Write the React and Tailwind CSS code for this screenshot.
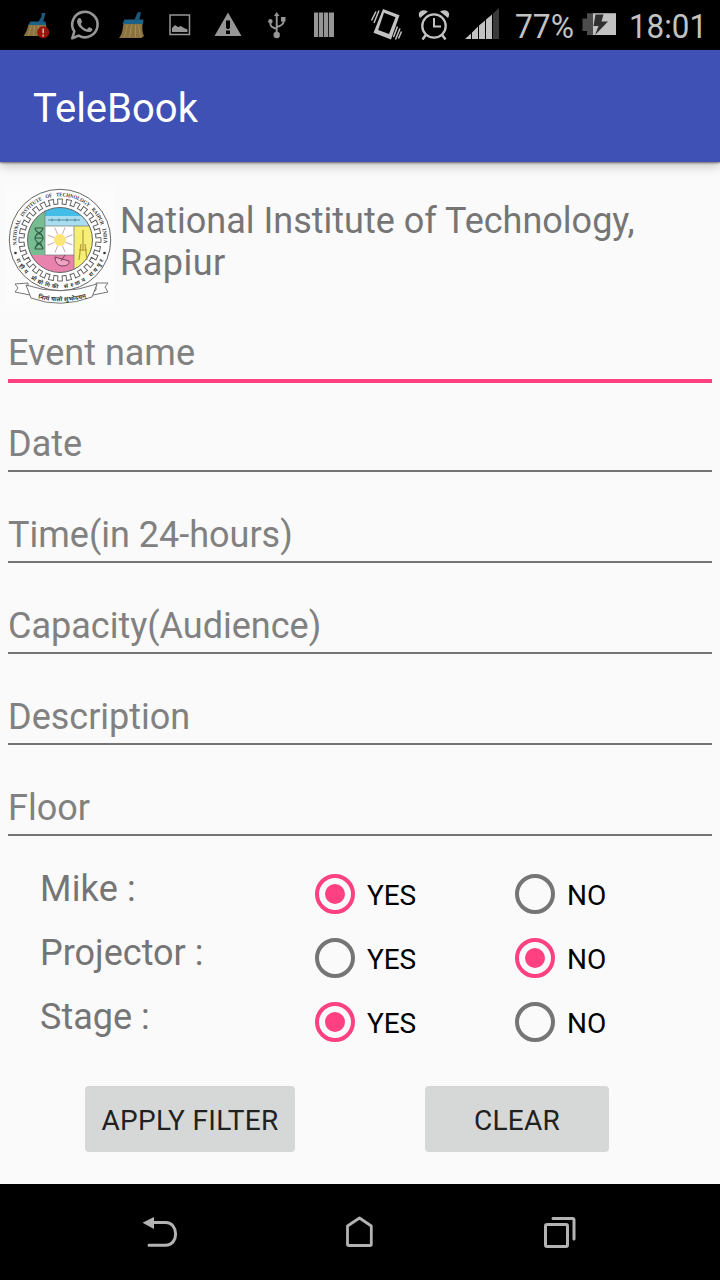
import React from "react";

function T({ children, className = "" }) {
  return <span className={"block whitespace-nowrap " + className}>{children}</span>;
}

function StatusBar() {
  return (
    <header className="h-[50px] bg-black overflow-hidden">
      <svg width="720" height="50" viewBox="0 0 720 50">
        <g transform="translate(21.5 12.5)">
          <path d="M7 12H24.500L25.500 23.500H2C5 20 6 16 7 12Z" fill="#8a7340" />
          <path d="M10 13L7 23M13 13L12 23M17 13L17 23M21 13L22 23" stroke="#a88e56" />
          <path d="M9 9H24L24.500 12.500H7Z" fill="#1c6288" />
          <path d="M16.500 10L20 4V0.500H24L21.500 10Z" fill="#1b587a" />
          <circle cx="21.700" cy="19.800" r="6" fill="#9c1208" />
          <path d="M21.700 16V20.800M21.700 22V24" stroke="#c9b0ac" strokeWidth="1.700" />
        </g>
        <path d="M72.300 38.200L74.300 31.500A12.700 12.700 0 1 1 78.700 35.600Z" fill="none" stroke="#969696" strokeWidth="2.600" strokeLinejoin="round" />
        <path d="M78.300 18.500C79.500 17.500 80.500 18 81 19L82 21.500C82.300 22.500 80.500 23.500 81 24.500C82.300 27 84.500 28.600 86.500 29.300C87.700 29.500 88.300 27 89.500 27.300L92.300 28.700C93 29.200 91.700 31.700 90 32C87 32.500 83.500 31 80.500 28C77 24.500 76 21 78.300 18.500Z" fill="#969696" />
        <g transform="translate(117.500 11)">
          <path d="M6 13H25C24.500 18 25 22 26.500 25L24 27H1.500C5 23 5 18 6 13Z" fill="#8a7340" />
          <path d="M10 14L7 26M14 14L12 26M18 14L18 26M21 14L23 26" stroke="#a88e56" />
          <path d="M7 8.500H26L25.500 13H5Z" fill="#1c6288" />
          <path d="M16.500 10L20 1.500L23.500 1L21.500 10Z" fill="#1b587a" />
        </g>
        <rect x="170" y="15" width="19.500" height="19.500" fill="none" stroke="#969696" strokeWidth="1.500" />
        <path d="M172 32V28L175 25L178 27L181 26L184 28L187.500 29.500V32Z" fill="#969696" />
        <path fillRule="evenodd" d="M228 12.500L241.500 36H214.500ZM226 20.500V27.500L227 29H229L230 27.500V20.500ZM226 30.500V34H230V30.500Z" fill="#969696" />
        <path d="M276.700 34V14M270.500 21V24.500Q270.500 27 276.700 28.800M283.500 19V22Q283.500 25 276.700 27" fill="none" stroke="#969696" strokeWidth="1.900" />
        <g fill="#969696">
          <circle cx="276.700" cy="35" r="3.200" />
          <circle cx="270.400" cy="21.300" r="2.200" />
          <path d="M281 17h4.500v4.500H281ZM276.700 12L279.500 16H274Z" />
        </g>
        <path d="M314 12.500h4.200V37h-4.200zM319 12.500h4.200V37h-4.200zM324 12.500h4.200V37h-4.200zM329 12.500h5V37h-5z" fill="#969696" />
        <path fillRule="evenodd" d="M383 9L399.500 15.200L391 39.500L373.500 32.800ZM384 12.800L378.200 30L389 34L395.500 17.200Z" fill="#c2c2c2" />
        <path d="M376 11.500L371.500 20.500M379 10.500L374 23M395.500 39.500L400 28.500M398.500 38.500L401.500 31.500M393.500 37L397.500 26.500" stroke="#c2c2c2" strokeWidth="1.500" />
        <g fill="none" stroke="#c2c2c2">
          <circle cx="434" cy="26" r="11.700" strokeWidth="2.300" />
          <path d="M434 18V26.500H441" strokeWidth="2" />
          <path d="M426.500 34L422.500 39.500M441.500 34L445.500 39.500" strokeWidth="2.500" />
        </g>
        <path d="M420 18C416.500 13 421 8 428 11.500ZM448 18C451.500 13 447 8 440 11.500Z" fill="#c2c2c2" />
        <path d="M465 39L471 33.500V39ZM472 32.500L478 26.500V39H472ZM479 25.500L485 20.500V39H479ZM486 19.500L492 14.500V39H486Z" fill="#c2c2c2" />
        <path d="M493 13.500L499 8V39H493Z" fill="#3a3a3a" />
        <path d="M582.500 18.500H587V13.300H593V35H587V31H582.500Z" fill="#4c4c4c" />
        <path d="M593 13.200H616V35H593Z" fill="#c2c2c2" />
        <path d="M595.500 14.500H603.500L601.500 21.500H608L595 35L598.500 26H593.500Z" fill="#303030" />
        <g fill="#c2c2c2" fontFamily="Roboto, sans-serif" fontSize="32.500">
          <text x="515" y="37.500" textLength="59" lengthAdjust="spacingAndGlyphs">77%</text>
          <text x="629" y="37.500" textLength="78" lengthAdjust="spacingAndGlyphs">18:01</text>
        </g>
      </svg>
    </header>
  );
}

const teeth = Array.from({ length: 28 }, (_, i) => (i * 360) / 28);
const rays = Array.from({ length: 8 }, (_, i) => i * 45);

function Crest() {
  return (
    <svg className="shrink-0" width="112" height="124" viewBox="0 0 112 124">
      <rect x="1" y="1" width="110" height="120" fill="#fcfcfc" />
      <defs>
        <clipPath id="disc"><circle cx="56" cy="56" r="32.500" /></clipPath>
        <path id="ringTop" d="M12.700 61A43.600 43.600 0 1 1 99.300 61" />
        <path id="ringLow" d="M12 75.500A48 48 0 0 0 100 75.500" />
        <path id="motto" d="M32 114Q58 121 84 113" />
      </defs>
      <circle cx="56" cy="56" r="50.700" fill="#fff" stroke="#666" strokeWidth="1" />
      {teeth.map((a) => (
        <path key={a} d="M51.700 20.200L54 20.200L53.500 15H58.500L58 20.200H60.300" transform={`rotate(${a} 56 56)`} fill="none" stroke="#666" strokeWidth="1" />
      ))}
      <g clipPath="url(#disc)">
        <rect x="20" y="20" width="21" height="51" fill="#78bd91" />
        <rect x="41" y="20" width="60" height="22" fill="#43bde8" />
        <rect x="41" y="32" width="60" height="10" fill="#a9def0" />
        <rect x="70" y="42" width="30" height="60" fill="#f5ef75" />
        <rect x="20" y="71" width="50" height="30" fill="#e982ad" />
        <rect x="41" y="42" width="29" height="29" fill="#fff" />
      </g>
      <circle cx="56" cy="56" r="32.500" fill="none" stroke="#666" />
      <path d="M41 26V71H70M41 42H86M70 42V86" fill="none" stroke="#777" strokeWidth="0.700" />
      {rays.map((a) => (
        <path key={a} d="M56 42.500V50" transform={`rotate(${a + 22} 56 56)`} stroke="#d2a4a8" strokeWidth="0.900" />
      ))}
      <circle cx="56" cy="56" r="6" fill="#fbe578" />
      <path d="M44 36H76M48 34.500v3M55 34.500v3M63 34.500v3M71 34.500v3" stroke="#477d94" strokeWidth="0.900" />
      <path d="M31 44C31 49 39 49 39 54S31 60 31 65M39 44C39 49 31 49 31 54S39 60 39 65M31 44H39M32 50H38M31 54H39M32 60H38M31 65H39" fill="none" stroke="#315844" strokeWidth="1.100" />
      <path d="M51 73Q51 81 58 82Q66 82 65 77ZM57 77L61 71" fill="#f0a3c2" stroke="#744456" strokeWidth="1" />
      <path d="M79 46V67M75 66H83M77 60L75 76M81 60L83 76" stroke="#b39b3b" strokeWidth="1.200" />
      <g fill="#333" fontFamily="'Liberation Serif', serif" fontWeight="700">
        <text fontSize="5.400" wordSpacing="3"><textPath href="#ringTop" textLength="145" lengthAdjust="spacingAndGlyphs">NATIONAL INSTITUTE OF TECHNOLOGY RAIPUR INDIA</textPath></text>
        <text fontSize="5.500" fontFamily="'Noto Sans', sans-serif"><textPath href="#ringLow" textLength="110">राष्ट्रीय प्रौद्योगिकी संस्थान रायपुर</textPath></text>
      </g>
      <circle cx="11.500" cy="69" r="1.300" fill="#333" />
      <circle cx="100.500" cy="69" r="1.300" fill="#333" />
      <path d="M24 99L11 100L14 104L11 108L31 112L24 106ZM92 99L104 99L101 103L104 108L84 112L92 106Z" fill="#fff" stroke="#666" strokeWidth="0.900" />
      <path d="M22 101Q56 113 93 100L88 113Q56 125 27 114Z" fill="#fff" stroke="#666" strokeWidth="0.900" />
      <text fontSize="6" fontWeight="700" fontFamily="'Noto Sans', sans-serif" fill="#333"><textPath href="#motto" startOffset="2" textLength="49">नित्यं यातो शुभोदयम्</textPath></text>
    </svg>
  );
}

function Field({ label, active, className = "" }) {
  return (
    <label className="h-[91px] shrink-0 px-2 flex flex-col">
      <T className={"h-[52px] pt-[5px] text-[36px] leading-[42px] text-[#818181] " + className}>{label}</T>
      <span className={active ? "h-1 bg-[#ff4081]" : "h-[2px] bg-[#757575]"} />
    </label>
  );
}

function Radio({ on, label, className = "" }) {
  return (
    <div className="w-[200px] h-[60px] flex items-center gap-3">
      <span className={"size-10 rounded-full border-4 flex items-center justify-center " + (on ? "border-[#ff4081]" : "border-[#757575]")}>
        {on && <span className="size-5 rounded-full bg-[#ff4081]" />}
      </span>
      <T className={"pt-[3px] text-[28px] leading-[34px] text-black " + className}>{label}</T>
    </div>
  );
}

function Choice({ label, yes, className = "" }) {
  return (
    <div className="h-16 flex pl-10">
      <div className="w-[275px]"><T className={"pt-1 text-[36px] leading-[42px] text-[#757575] " + className}>{label}</T></div>
      <Radio on={yes} label="YES" className="tracking-[-0.1px]" />
      <Radio on={!yes} label="NO" />
    </div>
  );
}

export default function App() {
  return (
    <div className="w-[720px] h-[1280px] flex flex-col bg-[#fafafa] font-['Roboto',sans-serif] overflow-hidden">
      <StatusBar />
      <div className="relative h-28 bg-[#3f51b5] flex items-center pl-8 shadow-[0_1px_2px_rgba(0,0,0,0.5),0_4px_10px_rgba(0,0,0,0.22)]">
        <T className="pt-1.5 pl-px text-[40px] leading-[48px] text-white">TeleBook</T>
      </div>
      <main className="flex-1 flex flex-col">
        <div className="h-[165px] flex pt-[22px] pl-1">
          <Crest />
          <div className="pt-4 pl-1 text-[36px] leading-[42px] text-[#757575]">
            <T>National Institute of Technology,</T>
            <T className="tracking-[0.5px]">Rapiur</T>
          </div>
        </div>
        <div className="h-[537px] shrink-0 flex flex-col">
          <Field label="Event name" active />
          <Field label="Date" />
          <Field label="Time(in 24-hours)" />
          <Field label="Capacity(Audience)" />
          <Field label="Description" />
          <Field label="Floor" />
        </div>
        <div className="flex flex-col">
          <Choice label="Mike :" yes className="tracking-[0.2px]" />
          <Choice label="Projector :" />
          <Choice label="Stage :" yes />
        </div>
        <div className="flex pl-[85px] pt-[30px] gap-[130px] text-[28px] text-[#212121]">
          <button className="w-[210px] h-[66px] rounded-[4px] bg-[#d6d8d7] flex items-center justify-center"><T className="pt-1 tracking-[0.3px]">APPLY FILTER</T></button>
          <button className="w-[184px] h-[66px] rounded-[4px] bg-[#d6d8d7] flex items-center justify-center"><T className="pt-1 tracking-[0.3px]">CLEAR</T></button>
        </div>
      </main>
      <nav className="h-24 shrink-0 bg-black">
        <svg width="720" height="96" viewBox="0 0 720 96" fill="none" stroke="#b3b3b3" strokeWidth="3" strokeLinejoin="round" strokeLinecap="round">
          <path d="M153 38.500H165.500C179 38.500 179 61.300 165.500 61.300H149" />
          <path d="M142.500 38.800L154 33V45Z" fill="#b3b3b3" stroke="none" />
          <path d="M347.500 42L359.500 34L371.300 42V60.500Q371.300 61.500 370 61.500H349Q347.500 61.500 347.500 60.500Z" strokeWidth="2.800" />
          <rect x="545.500" y="40.500" width="22" height="22" rx="1.500" />
          <path d="M553 34.500H572.500Q574 34.500 574 36V55" />
        </svg>
      </nav>
    </div>
  );
}
